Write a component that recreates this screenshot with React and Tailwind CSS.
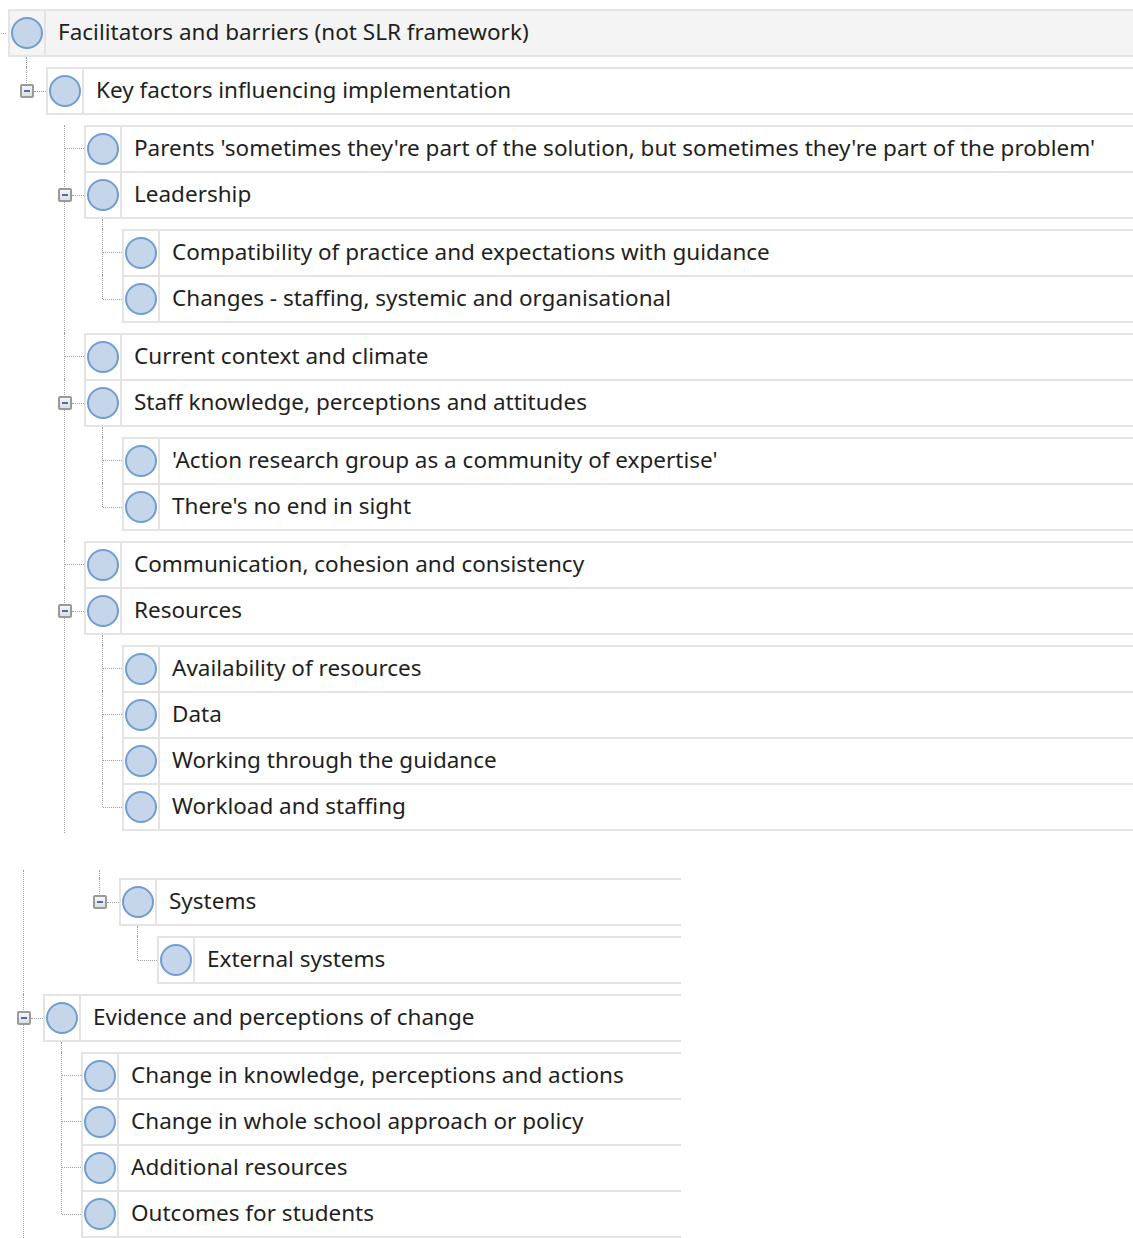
import React from 'react'

// dotted connector colour shared by all tree guides
const GUIDE = 'border-dotted border-[#9f9f9f]'

const keyFactors = [
  { label: "Parents 'sometimes they're part of the solution, but sometimes they're part of the problem'" },
  {
    label: 'Leadership',
    children: [
      { label: 'Compatibility of practice and expectations with guidance' },
      { label: 'Changes - staffing, systemic and organisational' },
    ],
  },
  { label: 'Current context and climate' },
  {
    label: 'Staff knowledge, perceptions and attitudes',
    children: [
      { label: "'Action research group as a community of expertise'" },
      { label: "There's no end in sight" },
    ],
  },
  { label: 'Communication, cohesion and consistency' },
  {
    label: 'Resources',
    children: [
      { label: 'Availability of resources' },
      { label: 'Data' },
      { label: 'Working through the guidance' },
      { label: 'Workload and staffing' },
    ],
  },
]

const systems = {
  label: 'Systems',
  children: [{ label: 'External systems' }],
}

const evidence = {
  label: 'Evidence and perceptions of change',
  children: [
    { label: 'Change in knowledge, perceptions and actions' },
    { label: 'Change in whole school approach or policy' },
    { label: 'Additional resources' },
    { label: 'Outcomes for students' },
  ],
}

function NodeIcon() {
  return <div className="size-[32px] rounded-full border-2 border-[#6f9dd2] bg-[#c5d6ea]" />
}

function Expander() {
  return (
    <div className="-ml-[7px] flex size-[14px] shrink-0 items-center justify-center rounded-[2px] border-2 border-[#9a9a9a] bg-gradient-to-b from-[#f7f7f7] to-[#dedede]">
      <div className="h-[2px] w-[6px] bg-[#5567b8]" />
    </div>
  )
}

function NodeBox({ label, closed, shaded }) {
  return (
    <div
      className={`flex flex-1 border-l-2 border-t-2 border-[#e4e4e4] ${closed ? 'h-[48px] border-b-2' : 'h-[46px]'} ${shaded ? 'bg-[#f4f4f4]' : 'bg-white'}`}
    >
      <div className="flex w-[36px] shrink-0 items-center justify-center border-r-2 border-[#e4e4e4]">
        <NodeIcon />
      </div>
      <div className="flex items-center whitespace-nowrap pb-[3px] pl-[12px] text-[22.5px] text-[#1f1f1f]">{label}</div>
    </div>
  )
}

function TreeItem({ node, last }) {
  const open = node.children && node.children.length > 0
  return (
    <div className={`border-l ${last ? 'border-transparent' : GUIDE}`}>
      <div className="flex">
        <div className="flex w-[19px] shrink-0 items-center">
          {last && <div className={`-ml-px h-1/2 self-start border-l ${GUIDE}`} />}
          {open && <Expander />}
          <div className={`flex-1 border-t ${GUIDE}`} />
        </div>
        <NodeBox label={node.label} closed={open || last} />
      </div>
      {open && <TreeList nodes={node.children} />}
    </div>
  )
}

function TreeList({ nodes, tail = true }) {
  return (
    <div className={`ml-[37px] ${tail ? 'pb-[10px]' : ''}`}>
      <div className={`h-[10px] border-l ${GUIDE}`} />
      {nodes.map((n, i) => (
        <TreeItem key={n.label} node={n} last={i === nodes.length - 1} />
      ))}
    </div>
  )
}

export default function App() {
  return (
    <div className="min-h-[1238px] w-[1133px] overflow-hidden bg-white font-['Noto_Sans',sans-serif]">
      {/* upper panel: key factors branch */}
      <div className="h-[833px] overflow-hidden pt-[9px]">
        <div className="flex">
          <div className="flex w-[8px] shrink-0 items-center">
            <div className={`ml-[1px] w-[5px] border-t ${GUIDE}`} />
          </div>
          <NodeBox label="Facilitators and barriers (not SLR framework)" closed shaded />
        </div>
        <div className="ml-[26px]">
          <div className={`h-[10px] border-l ${GUIDE}`} />
          <div className="border-l border-transparent">
            <div className="flex">
              <div className="flex w-[19px] shrink-0 items-center">
                <div className={`-ml-px h-1/2 self-start border-l ${GUIDE}`} />
                <Expander />
                <div className={`flex-1 border-t ${GUIDE}`} />
              </div>
              <NodeBox label="Key factors influencing implementation" closed />
            </div>
            <div className="ml-[37px] pt-[10px]">
              <div className={`border-l ${GUIDE}`}>
                {keyFactors.map((n) => (
                  <div key={n.label} className="-ml-px">
                    <TreeItem node={n} last={false} />
                  </div>
                ))}
              </div>
            </div>
          </div>
        </div>
      </div>

      {/* lower panel: systems and evidence branches */}
      <div className="mt-[37px] w-[681px]">
        <div className={`ml-[23px] border-l ${GUIDE}`}>
          <div className="ml-[75px]">
            <div className={`h-[8px] border-l ${GUIDE}`} />
            <TreeItem node={systems} last />
          </div>
        </div>
        <div className="ml-[23px]">
          <TreeItem node={evidence} last={false} />
        </div>
      </div>
    </div>
  )
}
